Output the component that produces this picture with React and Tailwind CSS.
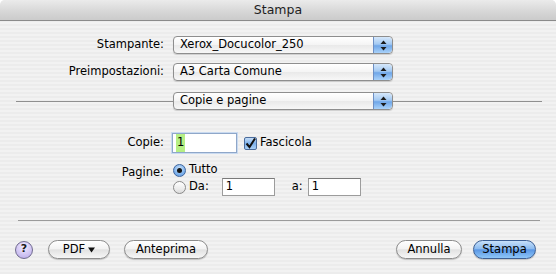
import React from 'react';

const font = { fontFamily: '"Lucida Grande", "DejaVu Sans", sans-serif' };

function PopupArrows() {
  return (
    <div className="flex h-full w-[19px] items-center justify-center rounded-r-[4px] border-l border-[#6d8fc4] bg-[linear-gradient(180deg,#d6e8fb_0%,#a3c9f2_45%,#6fa6e8_55%,#a9d2fa_100%)]">
      <svg width="7" height="11" viewBox="0 0 7 11">
        <path d="M3.5 0.5 L6.5 4 L0.5 4 Z" fill="#1b1b1b" />
        <path d="M3.5 10.5 L6.5 7 L0.5 7 Z" fill="#1b1b1b" />
      </svg>
    </div>
  );
}

function Popup({ text }) {
  return (
    <div className="flex h-[18px] w-[220px] items-stretch overflow-hidden rounded-[4px] border border-[#8e8e8e] bg-[linear-gradient(180deg,#ffffff_0%,#f4f4f4_50%,#e9e9e9_51%,#f7f7f7_100%)] shadow-[0_1px_1px_rgba(0,0,0,0.15)]">
      <div className="flex flex-1 items-center pl-[6px] text-[11.5px] text-black">{text}</div>
      <PopupArrows />
    </div>
  );
}

function Label({ children }) {
  return <div className="w-[164px] text-right text-[11.5px] text-black">{children}</div>;
}

function AquaButton({ children, width, primary }) {
  const base = primary
    ? 'border-[#3c5f94] bg-[linear-gradient(180deg,#c7e0fa_0%,#8dbcf0_45%,#5b97e4_52%,#8ec6f8_100%)]'
    : 'border-[#8c8c8c] bg-[linear-gradient(180deg,#ffffff_0%,#f3f3f3_45%,#e2e2e2_52%,#f6f6f6_100%)]';
  return (
    <div
      className={`flex h-[19px] items-center justify-center rounded-full border text-[11.5px] text-black shadow-[0_1px_1px_rgba(0,0,0,0.2)] ${base} ${width}`}
    >
      {children}
    </div>
  );
}

function Field({ value, width, focused }) {
  return (
    <div
      className={`flex items-center border bg-white pl-[3px] text-[11.5px] text-black ${width} ${
        focused
          ? 'h-[20px] border-[#8fa7c9] shadow-[0_0_0_1px_#c9daf0]'
          : 'h-[18px] border-[#9c9c9c] border-t-[#7a7a7a]'
      }`}
    >
      {focused ? <span className="bg-[#b6ef85] px-[1px]">{value}</span> : value}
    </div>
  );
}

export default function App() {
  return (
    <div className="h-[274px] w-[558px] overflow-hidden bg-white" style={font}>
      <div className="flex h-full w-[556px] flex-col overflow-hidden rounded-t-[5px] bg-[repeating-linear-gradient(0deg,#ececec_0px,#ececec_2px,#f2f2f2_2px,#f2f2f2_4px)]">
        {/* title bar */}
        <div className="flex h-[21px] shrink-0 items-center justify-center border-b border-[#8a8a8a] bg-[linear-gradient(180deg,#ebebeb_0%,#d6d6d6_60%,#cbcbcb_100%)] text-[12.5px] text-[#1e1e1e]">
          Stampa
        </div>

        <div className="flex flex-col pt-[15px]">
          <div className="flex items-center gap-[9px]">
            <Label>Stampante:</Label>
            <Popup text="Xerox_Docucolor_250" />
          </div>
          <div className="mt-[9px] flex items-center gap-[9px]">
            <Label>Preimpostazioni:</Label>
            <Popup text="A3 Carta Comune" />
          </div>

          {/* panel selector over a separator */}
          <div className="mt-[11px] flex items-center">
            <div className="ml-[16px] h-px w-[157px] bg-[#8f8f8f]" />
            <Popup text="Copie e pagine" />
            <div className="h-px w-[149px] bg-[#8f8f8f]" />
          </div>

          {/* copies */}
          <div className="mt-[23px] flex items-center gap-[8px]">
            <Label>Copie:</Label>
            <Field value="1" width="w-[65px]" focused />
            <div className="ml-[-1px] flex items-center gap-[3px] text-[11.5px] text-black">
              <div className="flex h-[13px] w-[13px] items-center justify-center rounded-[2px] border border-[#4b6c9c] bg-[linear-gradient(180deg,#c5ddf7_0%,#7db1ec_50%,#a9d0f7_100%)]">
                <svg width="11" height="11" viewBox="0 0 11 11">
                  <path d="M1.5 5.5 L4.5 9 L10 0.5" fill="none" stroke="#111" strokeWidth="2" />
                </svg>
              </div>
              Fascicola
            </div>
          </div>

          {/* pages */}
          <div className="mt-[10px] flex items-start gap-[9px]">
            <div className="w-[164px] pt-[1px] text-right text-[11.5px] text-black">Pagine:</div>
            <div className="flex flex-col gap-[1px] text-[11.5px] text-black">
              <div className="flex h-[14px] items-center gap-[3px]">
                <div className="flex h-[13px] w-[13px] items-center justify-center rounded-full border border-[#3f659e] bg-[radial-gradient(circle_at_50%_35%,#d2e6fb_0%,#7eb2ec_60%,#5e98e0_100%)]">
                  <div className="h-[5px] w-[5px] rounded-full bg-[#141414]" />
                </div>
                Tutto
              </div>
              <div className="flex items-center">
                <div className="flex items-center gap-[3px]">
                  <div className="h-[13px] w-[13px] rounded-full border border-[#8a8a8a] bg-[linear-gradient(180deg,#ffffff_0%,#ececec_60%,#dcdcdc_100%)]" />
                  Da:
                </div>
                <div className="ml-[13px]">
                  <Field value="1" width="w-[53px]" />
                </div>
                <div className="ml-[17px] w-[16px]">a:</div>
                <Field value="1" width="w-[53px]" />
              </div>
            </div>
          </div>

          <div className="ml-[18px] mt-[24px] h-px w-[522px] bg-[#9a9a9a]" />

          {/* buttons */}
          <div className="mt-[19px] flex items-center pl-[15px] pr-[20px]">
            <div className="flex h-[18px] w-[18px] items-center justify-center rounded-full border border-[#6f6a8e] bg-[radial-gradient(circle_at_50%_30%,#f2ecff_0%,#cfc3f2_60%,#b4a5e6_100%)] text-[11px] font-bold text-[#1a1a1a]">
              ?
            </div>
            <div className="ml-[15px]">
              <AquaButton width="w-[62px]">
                <span className="flex items-center gap-[3px]">
                  PDF
                  <svg width="7" height="6" viewBox="0 0 7 6">
                    <path d="M0 0.5 L7 0.5 L3.5 5.5 Z" fill="#111" />
                  </svg>
                </span>
              </AquaButton>
            </div>
            <div className="ml-[14px]">
              <AquaButton width="w-[84px]">Anteprima</AquaButton>
            </div>
            <div className="ml-auto">
              <AquaButton width="w-[66px]">Annulla</AquaButton>
            </div>
            <div className="ml-[11px]">
              <AquaButton width="w-[63px]" primary>
                Stampa
              </AquaButton>
            </div>
          </div>
        </div>
      </div>
    </div>
  );
}
